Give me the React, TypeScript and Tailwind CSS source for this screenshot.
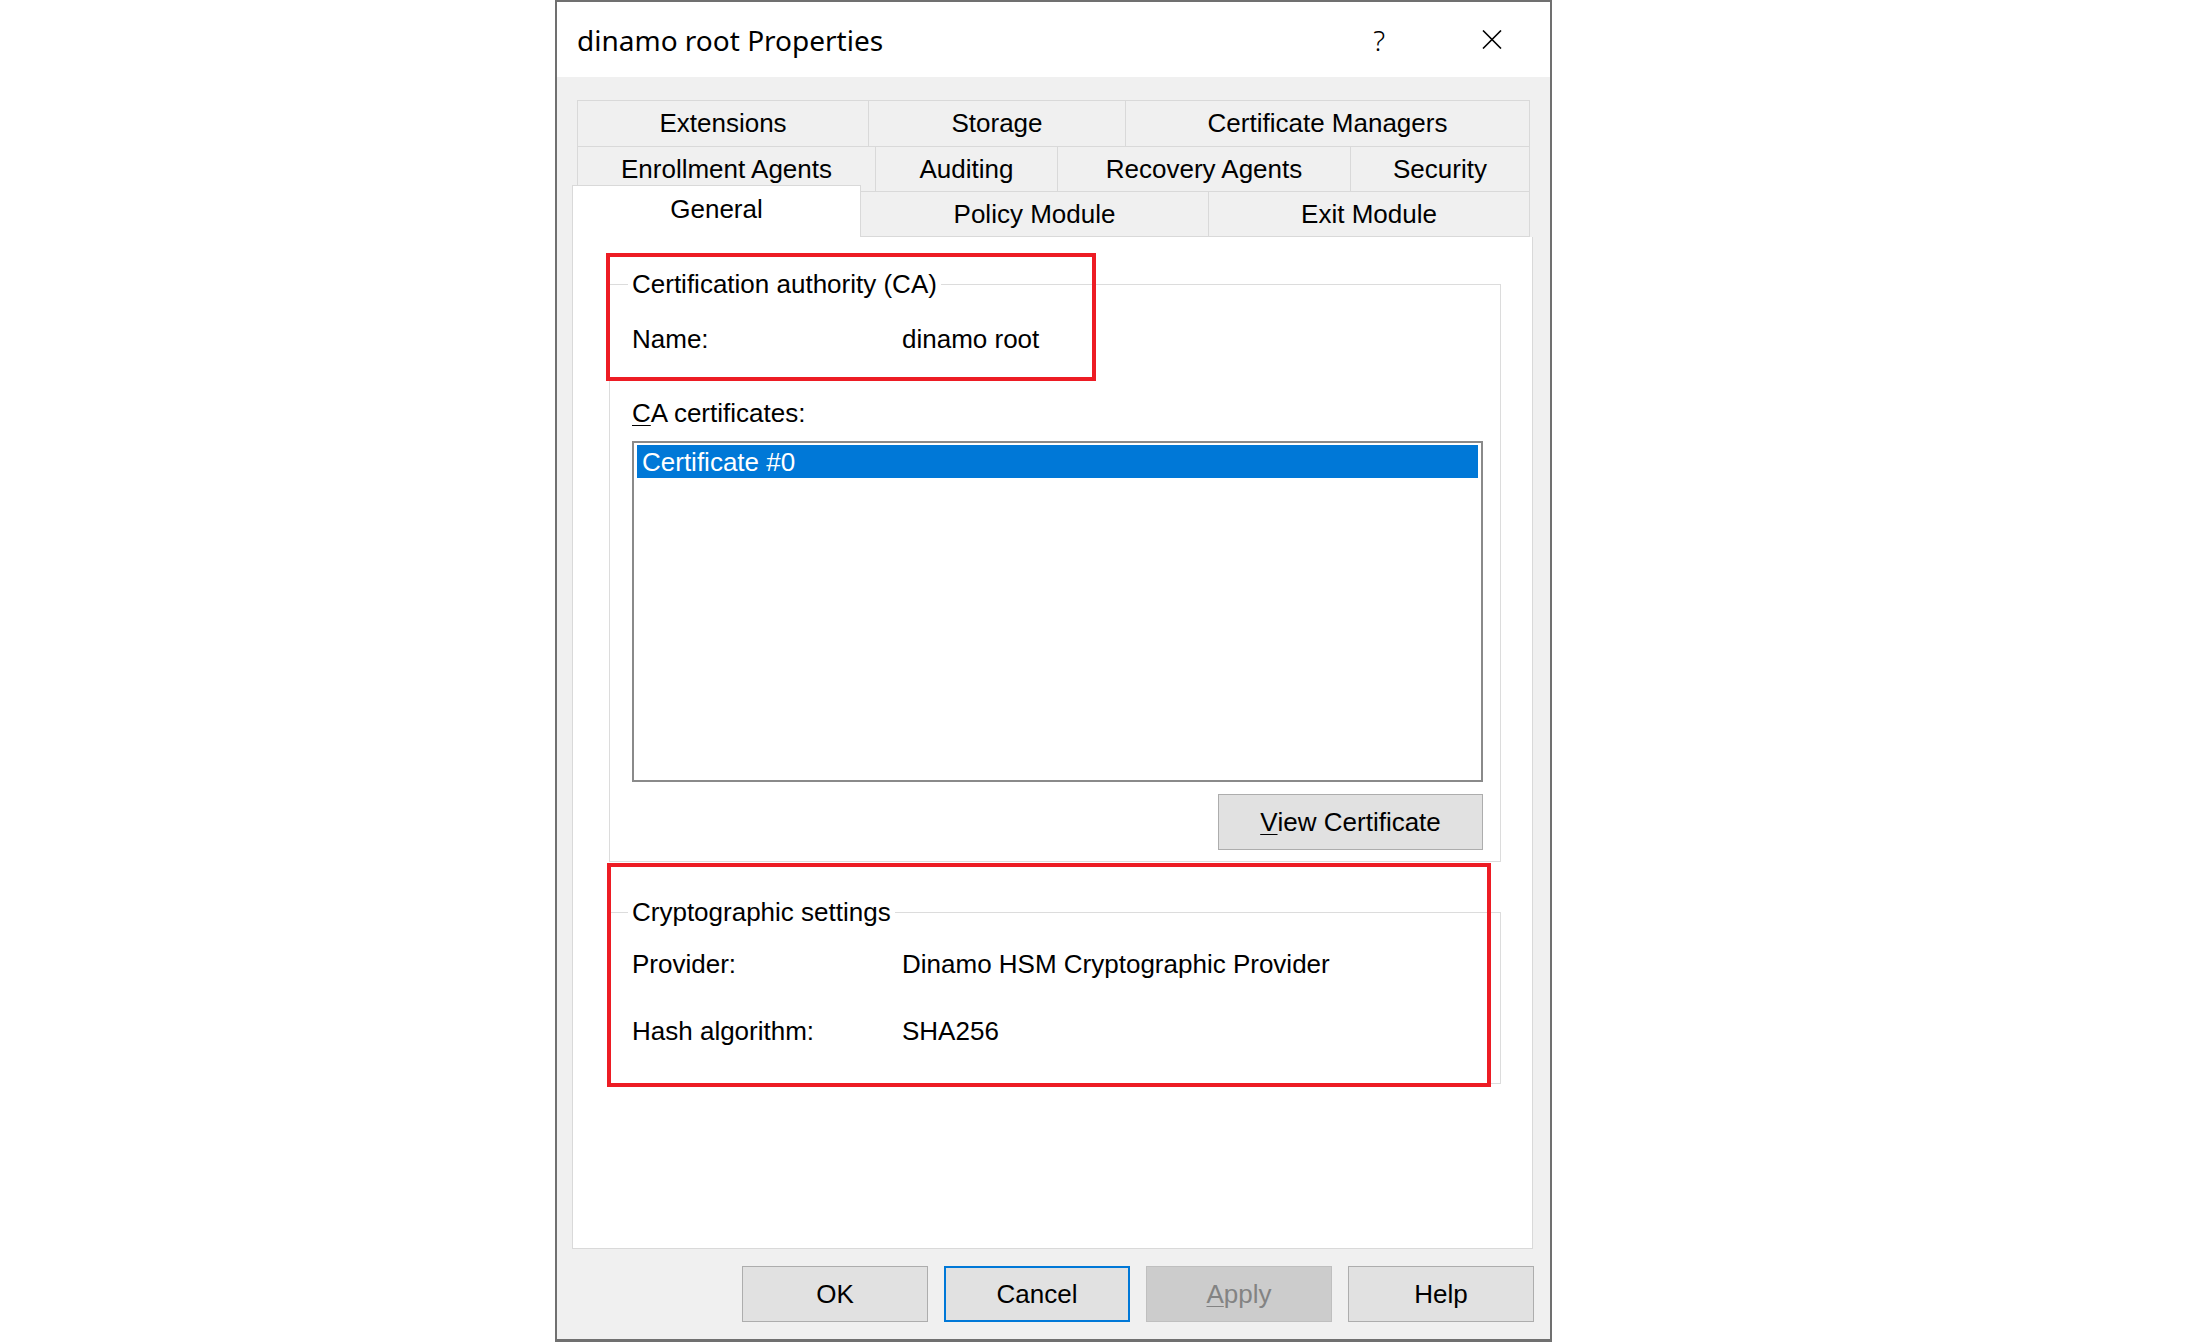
import type { ReactNode } from "react";

const body = "font-['Liberation_Sans',Arial,sans-serif]";

function Tab({ w, children }: { w: string; children: ReactNode }) {
  return (
    <div
      className={`-ml-px flex h-full shrink-0 items-center justify-center border border-[#d9d9d9] bg-[#f0f0f0] text-[26px] text-black first:ml-0 ${w}`}
    >
      {children}
    </div>
  );
}

function Button({
  children,
  variant = "normal",
  className = "",
}: {
  children: ReactNode;
  variant?: "normal" | "focus" | "disabled";
  className?: string;
}) {
  const look =
    variant === "focus"
      ? "border-2 border-[#0078d7] bg-[#e1e1e1] text-black"
      : variant === "disabled"
        ? "border border-[#bfbfbf] bg-[#cccccc] text-[#838383]"
        : "border border-[#adadad] bg-[#e1e1e1] text-black";
  return (
    <div
      className={`flex h-[56px] items-center justify-center text-[26px] ${look} ${className}`}
    >
      {children}
    </div>
  );
}

function Row({ label, value, className = "" }: { label: string; value: string; className?: string }) {
  return (
    <div className={`flex h-[30px] leading-[30px] ${className}`}>
      <span className="w-[270px]">{label}</span>
      <span>{value}</span>
    </div>
  );
}

export default function App() {
  return (
    <div className={`h-[1342px] w-full overflow-hidden bg-white ${body}`}>
      <div className="ml-[555px] flex h-[1342px] w-[997px] flex-col border-2 border-b-[3px] border-[#707070] bg-[#f0f0f0]">
        {/* title bar */}
        <div className="flex h-[75px] shrink-0 items-center bg-white pl-[20px]">
          <span className="font-['Noto_Sans',sans-serif] text-[28px] text-black">
            dinamo root Properties
          </span>
          <span className="ml-auto font-['Noto_Sans',sans-serif] text-[28px] font-light text-black">
            ?
          </span>
          <svg
            className="ml-[97px] mr-[48px]"
            width="20"
            height="19"
            viewBox="0 0 20 19"
            aria-hidden="true"
          >
            <path d="M1 0.5 L19 18.5 M19 0.5 L1 18.5" stroke="#000" strokeWidth="1.6" fill="none" />
          </svg>
        </div>

        {/* tabs */}
        <div className="shrink-0 pt-[23px]">
          <div className="ml-[20px] flex h-[47px]">
            <Tab w="w-[292px]">Extensions</Tab>
            <Tab w="w-[258px]">Storage</Tab>
            <Tab w="w-[405px]">Certificate Managers</Tab>
          </div>
          <div className="-mt-px ml-[20px] flex h-[46px]">
            <Tab w="w-[299px]">Enrollment Agents</Tab>
            <Tab w="w-[183px]">Auditing</Tab>
            <Tab w="w-[294px]">Recovery Agents</Tab>
            <Tab w="w-[180px]">Security</Tab>
          </div>
          <div className="-mt-px ml-[15px] flex h-[46px] items-end">
            <div className="relative z-10 flex h-[52px] w-[289px] shrink-0 items-center justify-center border border-b-0 border-[#d9d9d9] bg-white pb-[4px] text-[26px] text-black">
              General
            </div>
            <Tab w="w-[349px]">Policy Module</Tab>
            <Tab w="w-[322px]">Exit Module</Tab>
          </div>
        </div>

        {/* tab page */}
        <div className="relative ml-[15px] h-[1012px] w-[961px] shrink-0 border border-t-0 border-[#d9d9d9] bg-white text-[26px] text-black">
          <fieldset className="ml-[36px] mt-[32px] w-[892px] border border-[#dcdcdc] pb-[11px] pl-[22px] pr-[17px]">
            <legend className="-ml-[4px] px-[4px] leading-[30px]">Certification authority (CA)</legend>
            <Row className="mt-[25px]" label="Name:" value="dinamo root" />
            <div className="mt-[44px] h-[30px] leading-[30px]">
              <span className="underline decoration-1 underline-offset-[3px]">C</span>A certificates:
            </div>
            <div className="mt-[13px] h-[341px] border-2 border-[#8a8a8a] bg-white px-[3px] pt-[2px]">
              <div className="h-[33px] bg-[#0078d7] pl-[5px] pt-[2px] leading-[31px] text-white">
                Certificate #0
              </div>
            </div>
            <div className="mt-[12px] flex justify-end">
              <Button className="w-[265px]">
                <span className="underline decoration-1 underline-offset-[3px]">V</span>iew Certificate
              </Button>
            </div>
          </fieldset>

          <fieldset className="ml-[36px] mt-[35px] w-[892px] border border-[#dcdcdc] pb-[37px] pl-[22px] pr-[13px]">
            <legend className="-ml-[4px] px-[4px] leading-[30px]">Cryptographic settings</legend>
            <Row className="mt-[22px]" label="Provider:" value="Dinamo HSM Cryptographic Provider" />
            <Row className="mt-[37px]" label="Hash algorithm:" value="SHA256" />
          </fieldset>

          {/* red annotation boxes */}
          <div className="pointer-events-none absolute left-[33px] top-[16px] h-[128px] w-[490px] border-4 border-[#ed1c24]" />
          <div className="pointer-events-none absolute left-[34px] top-[626px] h-[224px] w-[884px] border-4 border-[#ed1c24]" />
        </div>

        {/* buttons */}
        <div className="flex shrink-0 justify-end gap-[16px] pr-[16px] pt-[17px]">
          <Button className="w-[186px]">OK</Button>
          <Button className="w-[186px]" variant="focus">
            Cancel
          </Button>
          <Button className="w-[186px]" variant="disabled">
            <span className="underline decoration-1 underline-offset-[3px]">A</span>pply
          </Button>
          <Button className="w-[186px]">Help</Button>
        </div>
      </div>
    </div>
  );
}
